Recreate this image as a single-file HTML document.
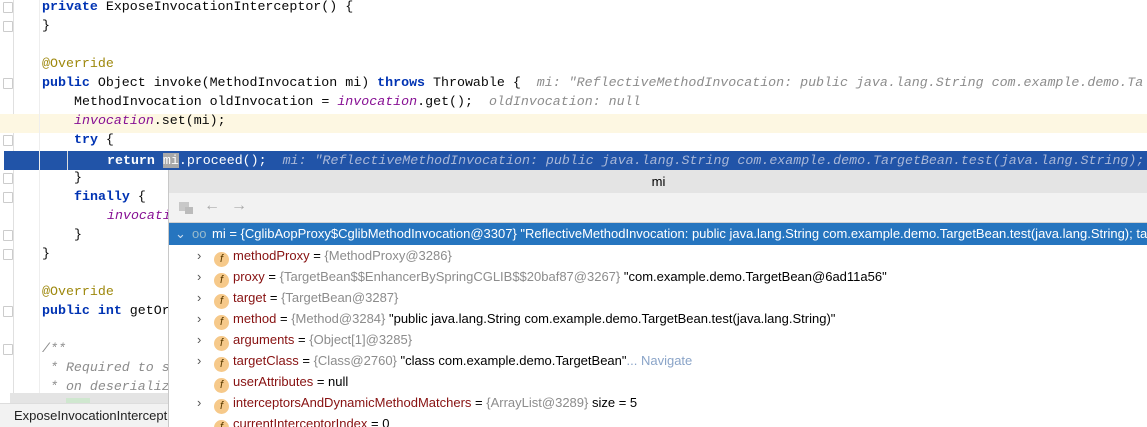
<!DOCTYPE html>
<html style="overflow:hidden;width:1147px;height:427px"><head><meta charset="utf-8"><style>
body{margin:0;width:1147px;height:427px;overflow:hidden;background:#fff;position:relative;font-family:"Liberation Mono",monospace}
.l{position:absolute;left:0;height:19px;line-height:19px;font-size:13.3px;white-space:pre;color:#080808}
.k{color:#0033b3;font-weight:bold}
.a{color:#9e880d}
.f{color:#871094;font-style:italic}
.h{color:#8c8c8c;font-style:italic}
.c{color:#8c8c8c;font-style:italic}
.gut{position:absolute;left:13px;top:0;width:1px;height:427px;background:#e0e0e0}
.fold{position:absolute;left:3px;width:8px;height:9px;border:1px solid #ccc;border-radius:1px;background:#fff}
.pop{position:absolute;left:168px;top:170px;width:979px;height:257px;background:#fff;border-left:1px solid #c8c8c8;font-family:"Liberation Sans","Noto Sans CJK SC",sans-serif;overflow:hidden}
.r{position:absolute;left:0;height:21px;line-height:21px;font-size:13px;white-space:nowrap;color:#000}
.n{color:#871111}
.g{color:#8c8c8c}
.ic{display:inline-block;width:15px;height:15px;border-radius:50%;background:#f6c98a;color:#5a3b00;font-size:11px;line-height:15px;text-align:center;vertical-align:-2px;margin-right:4px;font-style:italic;position:relative}
.ar{position:absolute;left:28px;color:#555;font-size:13px}
</style></head><body>
<div class="gut"></div>
<div style="position:absolute;left:0;top:114px;width:1147px;height:19px;background:#fdf7e2"></div>
<div style="position:absolute;left:4px;top:151px;width:1143px;height:19px;background:#2154a8"></div>
<div style="position:absolute;left:39px;top:0;width:1px;height:405px;background:#eee"></div>
<div style="position:absolute;left:67px;top:151px;width:1px;height:19px;background:#ddd"></div>

<div class="l" style="top:-3px;left:42px"><span class="k">private</span> ExposeInvocationInterceptor() {</div>
<div class="l" style="top:16px;left:42px">}</div>
<div class="l" style="top:54px;left:42px"><span class="a">@Override</span></div>
<div class="l" style="top:73px;left:42px"><span class="k">public</span> Object invoke(MethodInvocation mi) <span class="k">throws</span> Throwable {  <span class="h">mi: "ReflectiveMethodInvocation: public java.lang.String com.example.demo.Ta</span></div>
<div class="l" style="top:92px;left:74px">MethodInvocation oldInvocation = <span class="f">invocation</span>.get();  <span class="h">oldInvocation: null</span></div>
<div class="l" style="top:111px;left:74px"><span class="f">invocation</span>.set(mi);</div>
<div class="l" style="top:130px;left:74px"><span class="k">try</span> {</div>
<div class="l" style="top:151px;left:107px;color:#fff"><b>return</b> <span style="background:#a9a9a9;color:#fff">mi</span>.proceed();  <span style="color:#aab8d8;font-style:italic">mi: "ReflectiveMethodInvocation: public java.lang.String com.example.demo.TargetBean.test(java.lang.String);</span></div>
<div class="l" style="top:168px;left:74px">}</div>
<div class="l" style="top:187px;left:74px"><span class="k">finally</span> {</div>
<div class="l" style="top:206px;left:107px"><span class="f">invocati</span></div>
<div class="l" style="top:225px;left:74px">}</div>
<div class="l" style="top:244px;left:42px">}</div>
<div class="l" style="top:282px;left:42px"><span class="a">@Override</span></div>
<div class="l" style="top:301px;left:42px"><span class="k">public int</span> getOr</div>
<div class="l" style="top:339px;left:42px"><span class="c">/**</span></div>
<div class="l" style="top:358px;left:42px"><span class="c"> * Required to s</span></div>
<div class="l" style="top:377px;left:42px"><span class="c"> * on deserializ</span></div>
<div style="position:absolute;left:10px;top:393px;width:158px;height:12px;background:#e4e4e4"></div>
<div style="position:absolute;left:66px;top:398px;width:24px;height:7px;background:#cfe7cf"></div>
<div style="position:absolute;left:0;top:403px;width:168px;height:24px;background:#f2f2f2;border-top:1px solid #ddd;font-family:'Liberation Sans',sans-serif;font-size:13px;line-height:24px;color:#222;padding-left:14px;box-sizing:border-box;white-space:nowrap;overflow:hidden">ExposeInvocationIntercept</div>

<div class="fold" style="top:2px"></div><div class="fold" style="top:21px"></div>
<div class="fold" style="top:78px"></div><div class="fold" style="top:135px"></div>
<div class="fold" style="top:173px"></div><div class="fold" style="top:192px"></div>
<div class="fold" style="top:230px"></div><div class="fold" style="top:249px"></div>
<div class="fold" style="top:306px"></div><div class="fold" style="top:344px"></div>

<div class="pop">
 <div style="position:absolute;left:0;top:0;width:979px;height:23px;background:#e4e4e4;text-align:center;line-height:23px;font-size:13px;color:#000">mi</div>
 <div style="position:absolute;left:0;top:23px;width:979px;height:29px;background:#f2f2f2;border-bottom:1px solid #d0d0d0">
  <div style="position:absolute;left:10px;top:9px;width:10px;height:9px;background:#c8c8c8"></div>
  <div style="position:absolute;left:16px;top:14px;width:8px;height:7px;background:#bbb"></div>
  <span style="position:absolute;left:35px;top:4px;color:#aaa;font-size:16px">←</span>
  <span style="position:absolute;left:62px;top:4px;color:#aaa;font-size:16px">→</span>
 </div>
 <div class="r" style="top:53px;width:979px;height:22px;line-height:22px;background:#2675bf;color:#fff"><span style="position:absolute;left:6px;color:#cde">⌄</span><span style="position:absolute;left:23px;color:#9bc">oo</span><span style="position:absolute;left:43px">mi = {CglibAopProxy$CglibMethodInvocation@3307} "ReflectiveMethodInvocation: public java.lang.String com.example.demo.TargetBean.test(java.lang.String); ta</span></div>
 <div class="r" style="top:75px"><span class="ar">›</span><span style="position:absolute;left:45px"><span class="ic">f</span><span class="n">methodProxy</span> = <span class="g">{MethodProxy@3286}</span></span></div>
 <div class="r" style="top:96px"><span class="ar">›</span><span style="position:absolute;left:45px"><span class="ic">f</span><span class="n">proxy</span> = <span class="g">{TargetBean$$EnhancerBySpringCGLIB$$20baf87@3267}</span> "com.example.demo.TargetBean@6ad11a56"</span></div>
 <div class="r" style="top:117px"><span class="ar">›</span><span style="position:absolute;left:45px"><span class="ic">f</span><span class="n">target</span> = <span class="g">{TargetBean@3287}</span></span></div>
 <div class="r" style="top:138px"><span class="ar">›</span><span style="position:absolute;left:45px"><span class="ic">f</span><span class="n">method</span> = <span class="g">{Method@3284}</span> "public java.lang.String com.example.demo.TargetBean.test(java.lang.String)"</span></div>
 <div class="r" style="top:159px"><span class="ar">›</span><span style="position:absolute;left:45px"><span class="ic">f</span><span class="n">arguments</span> = <span class="g">{Object[1]@3285}</span></span></div>
 <div class="r" style="top:180px"><span class="ar">›</span><span style="position:absolute;left:45px"><span class="ic">f</span><span class="n">targetClass</span> = <span class="g">{Class@2760}</span> "class com.example.demo.TargetBean"<span style="color:#8aa4c8">... Navigate</span></span></div>
 <div class="r" style="top:201px"><span style="position:absolute;left:45px"><span class="ic">f</span><span class="n">userAttributes</span> = null</span></div>
 <div class="r" style="top:222px"><span class="ar">›</span><span style="position:absolute;left:45px"><span class="ic">f</span><span class="n">interceptorsAndDynamicMethodMatchers</span> = <span class="g">{ArrayList@3289}</span>  size = 5</span></div>
 <div class="r" style="top:243px"><span style="position:absolute;left:45px"><span class="ic">f</span><span class="n">currentInterceptorIndex</span> = 0</span></div>
</div>
</body></html>
